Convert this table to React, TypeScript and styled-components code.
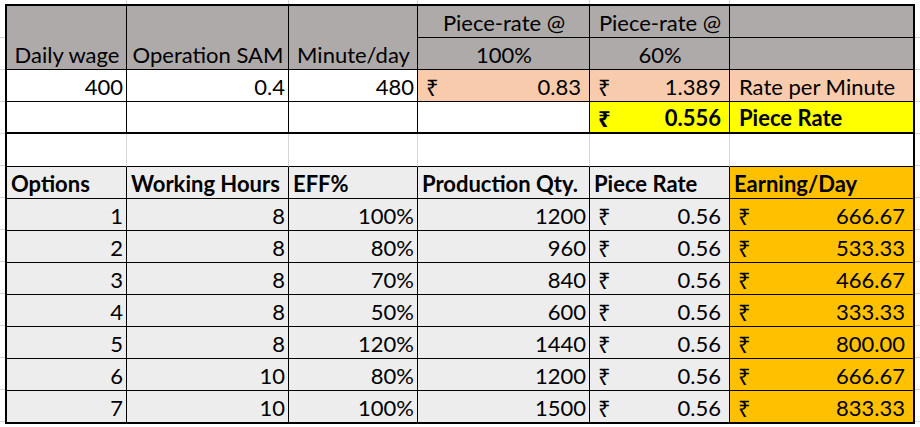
import React from 'react';
import styled, { createGlobalStyle } from 'styled-components';

const FONT = `Lato, "Noto Sans", "DejaVu Sans", sans-serif`;
const FONT_SIZE = 22;
const GRIDLINE = '#d6d6d6';
const INK = '#000';

const GlobalStyle = createGlobalStyle`
  html, body { margin: 0; padding: 0; background: #fff; }
  body { font-family: ${FONT}; color: ${INK}; }
`;

const colLines = [126, 288, 417, 589, 729];

const Sheet = styled.div`
  width: 920px;
  height: 427px;
  box-sizing: border-box;
  padding: 4px 0 0 5px;
  overflow: hidden;
  background:
    ${colLines.map((x) => `linear-gradient(${GRIDLINE}, ${GRIDLINE}) ${x}px 0 / 1px 4px no-repeat`).join(',\n    ')},
    repeating-linear-gradient(to bottom, transparent 0 31px, ${GRIDLINE} 31px 32px) 0 6px / 100% 100% no-repeat,
    #fff;
`;

const Grid = styled.div`
  display: grid;
  grid-template-columns: 120px 162px 129px 172px 140px 183px;
  grid-template-rows: 32px 32px 32px 32px 33px 32px repeat(6, 32px) 31px;
  width: max-content;
  border: 2px solid ${INK};
  background: #fff;
  font-size: ${FONT_SIZE}px;
`;

type CellProps = {
  $bg?: string;
  $bold?: boolean;
  $edge?: boolean;
  $thick?: boolean;
  $open?: boolean;
  $span?: number;
};

const BaseCell = styled.div<CellProps>`
  box-sizing: border-box;
  display: flex;
  align-items: flex-end;
  min-width: 0;
  padding: 0 3px 1px 4px;
  line-height: 26px;
  white-space: nowrap;
  background: ${(p) => p.$bg ?? '#fff'};
  font-weight: ${(p) => (p.$bold ? 700 : 400)};
  border-right: ${(p) => (p.$edge ? 'none' : `1px solid ${INK}`)};
  border-bottom: ${(p) => (p.$open ? 'none' : p.$thick ? `2px solid ${INK}` : `1px solid ${INK}`)};
  grid-row: ${(p) => (p.$span ? `span ${p.$span}` : 'auto')};
`;

const HeadCell = styled(BaseCell)`
  justify-content: center;
`;

const NumCell = styled(BaseCell)`
  justify-content: flex-end;
`;

const TextCell = styled(BaseCell)`
  justify-content: flex-start;
`;

const NoteCell = styled(BaseCell)`
  justify-content: flex-start;
  padding-left: 9px;
`;

const MoneyCell = styled(BaseCell)`
  justify-content: space-between;
  padding-left: 8px;
  padding-right: 8px;
`;

const GapCell = styled(BaseCell)`
  border-right: ${(p) => (p.$edge ? 'none' : `1px solid ${GRIDLINE}`)};
`;

const Rupee = styled.span`
  font-family: "Noto Sans", "DejaVu Sans", sans-serif;
`;

const GRAY = '#aeaaaa';
const PEACH = '#f8cbad';
const YELLOW = '#ffff00';
const LIGHT = '#ededed';
const ORANGE = '#ffc000';

type Row = [number, number, string, number, string, string];

const rows: Row[] = [
  [1, 8, '100%', 1200, '0.56', '666.67'],
  [2, 8, '80%', 960, '0.56', '533.33'],
  [3, 8, '70%', 840, '0.56', '466.67'],
  [4, 8, '50%', 600, '0.56', '333.33'],
  [5, 8, '120%', 1440, '0.56', '800.00'],
  [6, 10, '80%', 1200, '0.56', '666.67'],
  [7, 10, '100%', 1500, '0.56', '833.33'],
];

const Money: React.FC<{ value: string }> = ({ value }) => (
  <>
    <Rupee>₹</Rupee>
    <span>{value}</span>
  </>
);

export default function App() {
  return (
    <>
      <GlobalStyle />
      <Sheet>
        <Grid>
          {/* Top block header */}
          <HeadCell $bg={GRAY} $span={2}>Daily wage</HeadCell>
          <HeadCell $bg={GRAY} $span={2}>Operation SAM</HeadCell>
          <HeadCell $bg={GRAY} $span={2}>Minute/day</HeadCell>
          <HeadCell $bg={GRAY}>Piece-rate @</HeadCell>
          <HeadCell $bg={GRAY}>Piece-rate @</HeadCell>
          <HeadCell $bg={GRAY} $edge />
          <HeadCell $bg={GRAY}>100%</HeadCell>
          <HeadCell $bg={GRAY}>60%</HeadCell>
          <HeadCell $bg={GRAY} $edge />

          {/* Inputs */}
          <NumCell>400</NumCell>
          <NumCell>0.4</NumCell>
          <NumCell>480</NumCell>
          <MoneyCell $bg={PEACH}><Money value="0.83" /></MoneyCell>
          <MoneyCell $bg={PEACH}><Money value="1.389" /></MoneyCell>
          <NoteCell $bg={PEACH} $edge>Rate per Minute</NoteCell>

          <TextCell $thick />
          <TextCell $thick />
          <TextCell $thick />
          <TextCell $thick />
          <MoneyCell $bg={YELLOW} $bold $thick><Money value="0.556" /></MoneyCell>
          <NoteCell $bg={YELLOW} $bold $thick $edge>Piece Rate</NoteCell>

          {/* spacer row */}
          <GapCell />
          <GapCell />
          <GapCell />
          <GapCell />
          <GapCell />
          <GapCell $edge />

          {/* Options table header */}
          <TextCell $bg={LIGHT} $bold>Options</TextCell>
          <TextCell $bg={LIGHT} $bold>Working Hours</TextCell>
          <TextCell $bg={LIGHT} $bold>EFF%</TextCell>
          <TextCell $bg={LIGHT} $bold>Production Qty.</TextCell>
          <TextCell $bg={LIGHT} $bold>Piece Rate</TextCell>
          <TextCell $bg={ORANGE} $bold $edge>Earning/Day</TextCell>

          {rows.map(([opt, hrs, eff, qty, rate, earn], i) => {
            const last = i === rows.length - 1;
            return (
              <React.Fragment key={opt}>
                <NumCell $bg={LIGHT} $open={last}>{opt}</NumCell>
                <NumCell $bg={LIGHT} $open={last}>{hrs}</NumCell>
                <NumCell $bg={LIGHT} $open={last}>{eff}</NumCell>
                <NumCell $bg={LIGHT} $open={last}>{qty}</NumCell>
                <MoneyCell $bg={LIGHT} $open={last}><Money value={rate} /></MoneyCell>
                <MoneyCell $bg={ORANGE} $open={last} $edge><Money value={earn} /></MoneyCell>
              </React.Fragment>
            );
          })}
        </Grid>
      </Sheet>
    </>
  );
}
